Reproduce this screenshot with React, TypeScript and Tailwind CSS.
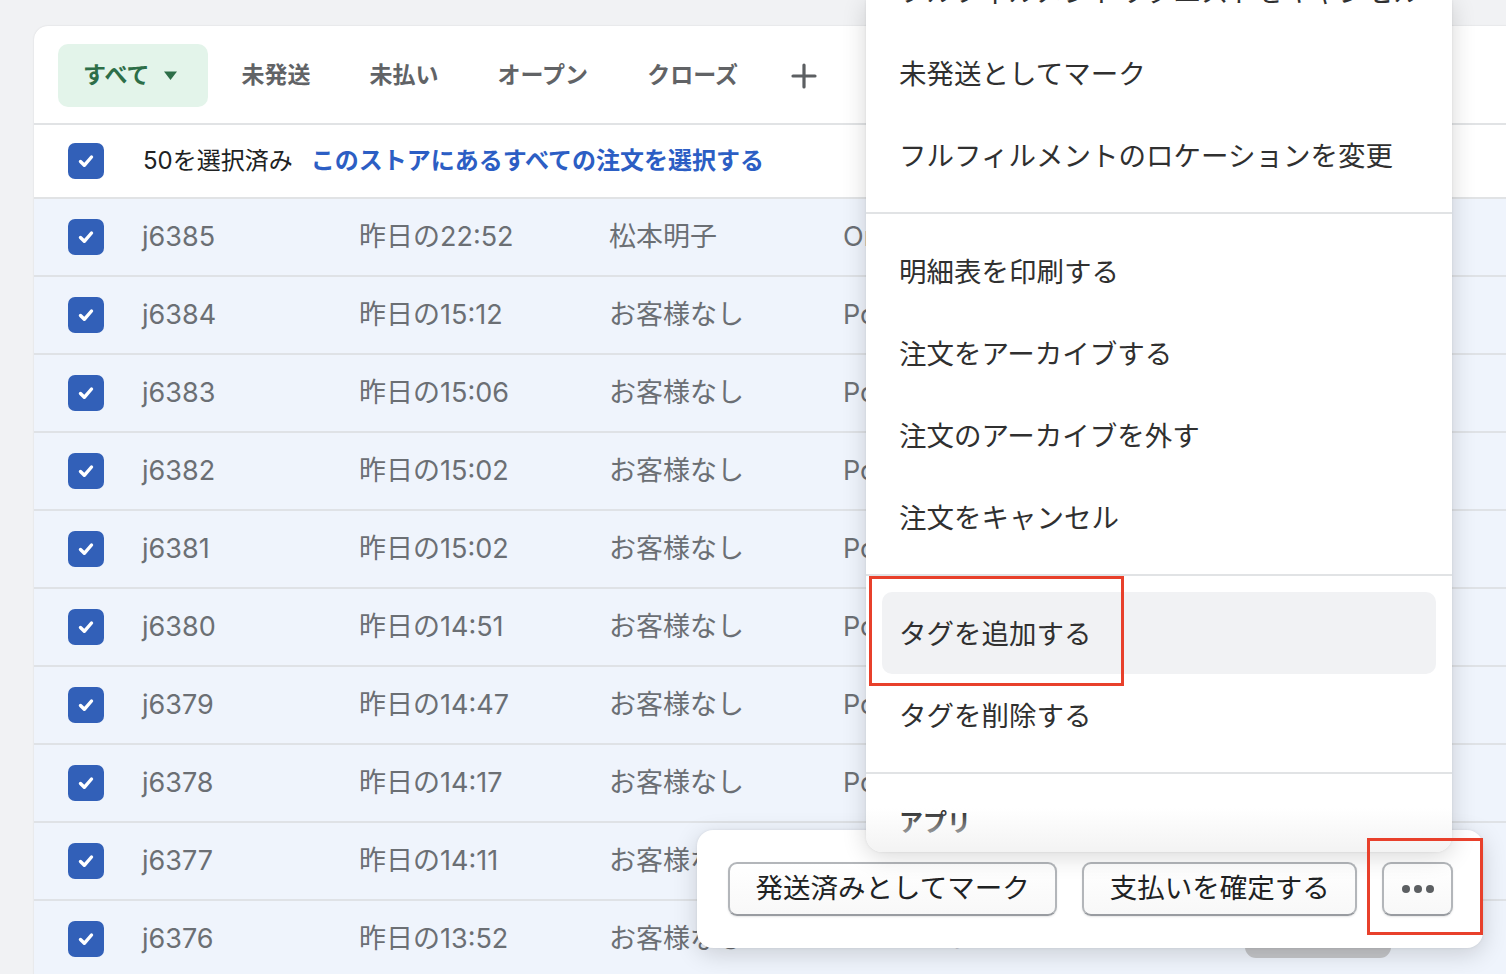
import React from "react";

const FONT = { fontFamily: '"Inter", "Noto Sans CJK JP", sans-serif' };

function Check() {
  return (
    <div className="flex h-[36px] w-[36px] shrink-0 items-center justify-center rounded-[7px] bg-[#3260b8]">
      <svg width="22" height="22" viewBox="0 0 22 22" fill="none">
        <path d="M5.5 11.5l3.8 3.8L16.5 7" stroke="white" strokeWidth="3.4" strokeLinecap="round" strokeLinejoin="round" />
      </svg>
    </div>
  );
}

const rows = [
  ["j6385", "昨日の22:52", "松本明子", "Online Store"],
  ["j6384", "昨日の15:12", "お客様なし", "Point of Sale"],
  ["j6383", "昨日の15:06", "お客様なし", "Point of Sale"],
  ["j6382", "昨日の15:02", "お客様なし", "Point of Sale"],
  ["j6381", "昨日の15:02", "お客様なし", "Point of Sale"],
  ["j6380", "昨日の14:51", "お客様なし", "Point of Sale"],
  ["j6379", "昨日の14:47", "お客様なし", "Point of Sale"],
  ["j6378", "昨日の14:17", "お客様なし", "Point of Sale"],
  ["j6377", "昨日の14:11", "お客様なし", "Point of Sale"],
  ["j6376", "昨日の13:52", "お客様なし", "Point of Sale"],
];

function MenuItem({ label, active }: { label: string; active?: boolean }) {
  return (
    <div
      className={`mx-[16px] flex h-[82px] items-center whitespace-nowrap rounded-[10px] px-[17px] pt-[4px] text-[27.5px] text-[#303030] ${
        active ? "bg-[#f1f2f4]" : ""
      }`}
    >
      {label}
    </div>
  );
}

const btn =
  "flex h-[54px] items-center rounded-[9px] border-2 border-[#b3b6ba] border-b-[#999ca1] bg-gradient-to-b from-white to-[#f8f8f8] shadow-[0_1px_2px_rgba(0,0,0,0.1)]";

export default function App() {
  return (
    <div style={FONT} className="relative h-[974px] w-[1506px] overflow-hidden bg-[#f1f2f4]">
      {/* Card */}
      <div className="ml-[34px] mt-[26px] w-[1520px] rounded-tl-[14px] bg-white shadow-[0_0_2px_rgba(0,0,0,0.12)]">
        {/* tabs */}
        <div className="flex h-[97px] items-start pl-[24px] pt-[18px]">
          <div className="flex h-[63px] w-[150px] items-center gap-[14px] rounded-[10px] bg-[#e3f4ea] pl-[25px] text-[23px] font-semibold text-[#2d6e48]">
            <span>すべて</span>
            <svg width="15" height="11" viewBox="0 0 15 11">
              <path d="M1 1.5h13L7.5 10z" fill="#2d6e48" />
            </svg>
          </div>
          <div className="ml-[4px] flex h-[63px] items-center">
            {["未発送", "未払い", "オープン", "クローズ"].map((t) => (
              <div key={t} className="px-[29.5px] text-[23px] font-semibold text-[#616366]">
                {t}
              </div>
            ))}
            <svg className="ml-[24px]" width="26" height="26" viewBox="0 0 26 26">
              <path d="M13 2v22M2 13h22" stroke="#5c5f62" strokeWidth="3.2" strokeLinecap="round" />
            </svg>
          </div>
        </div>
        {/* selection row */}
        <div className="flex h-[76px] items-center border-y-2 border-[#e1e3e5] pl-[34px]">
          <Check />
          <span className="ml-[39px] text-[24px] text-[#202223]">50を選択済み</span>
          <span className="ml-[18px] text-[24px] font-bold text-[#2c5ec4]">
            このストアにあるすべての注文を選択する
          </span>
        </div>
        {/* rows */}
        {rows.map((r) => (
          <div
            key={r[0]}
            className="flex h-[78px] items-center border-b-2 border-[#dfe2e6] bg-[#eff4fc] pl-[34px] text-[27px] text-[#6b6f74]"
          >
            <Check />
            <span className="ml-[38px] w-[217px]">{r[0]}</span>
            <span className="w-[250px]">{r[1]}</span>
            <span className="w-[234px]">{r[2]}</span>
            <span>{r[3]}</span>
          </div>
        ))}
      </div>

      {/* gray element peeking below bar */}
      <div className="absolute left-[1245px] top-[936px] h-[22px] w-[146px] rounded-full bg-[#c6c7ca]" />

      {/* bottom action bar */}
      <div className="absolute left-[697px] top-[830px] flex h-[118px] w-[786px] items-center gap-[25px] rounded-[16px] bg-white pl-[31px] shadow-[0_6px_24px_rgba(0,0,0,0.16),0_0_3px_rgba(0,0,0,0.08)]">
        <button className={`${btn} px-[25.5px] text-[27.5px] text-[#202223]`}>発送済みとしてマーク</button>
        <button className={`${btn} px-[25.5px] text-[27.5px] text-[#202223]`}>支払いを確定する</button>
        <button className={`${btn} w-[71px] justify-center gap-[4px]`}>
          <span className="h-[8px] w-[8px] rounded-full bg-[#5c5f62]" />
          <span className="h-[8px] w-[8px] rounded-full bg-[#5c5f62]" />
          <span className="h-[8px] w-[8px] rounded-full bg-[#5c5f62]" />
        </button>
      </div>

      {/* dropdown menu */}
      <div className="absolute left-[866px] top-0 h-[852px] w-[586px] overflow-hidden rounded-b-[16px] bg-white shadow-[0_4px_24px_rgba(0,0,0,0.16),0_0_3px_rgba(0,0,0,0.08)]">
        <div className="mt-[-50px]">
          <div className="pb-[16px]">
            <MenuItem label="フルフィルメントリクエストをキャンセル" />
            <MenuItem label="未発送としてマーク" />
            <MenuItem label="フルフィルメントのロケーションを変更" />
          </div>
          <div className="border-t-2 border-[#e1e3e5] py-[16px]">
            <MenuItem label="明細表を印刷する" />
            <MenuItem label="注文をアーカイブする" />
            <MenuItem label="注文のアーカイブを外す" />
            <MenuItem label="注文をキャンセル" />
          </div>
          <div className="border-t-2 border-[#e1e3e5] py-[16px]">
            <MenuItem label="タグを追加する" active />
            <MenuItem label="タグを削除する" />
          </div>
          <div className="border-t-2 border-[#e1e3e5] pt-[34px]">
            <div className="px-[33px] text-[24px] font-bold leading-[30px] text-[#202223]">アプリ</div>
          </div>
        </div>
        <div className="absolute bottom-0 left-0 h-[44px] w-full bg-gradient-to-b from-white/0 to-[#f3f3f3]" />
      </div>

      {/* annotation boxes */}
      <div className="absolute left-[869px] top-[576px] h-[110px] w-[255px] border-[3px] border-[#e8402b]" />
      <div className="absolute left-[1367px] top-[838px] h-[97px] w-[116px] border-[3px] border-[#e8402b]" />
    </div>
  );
}
